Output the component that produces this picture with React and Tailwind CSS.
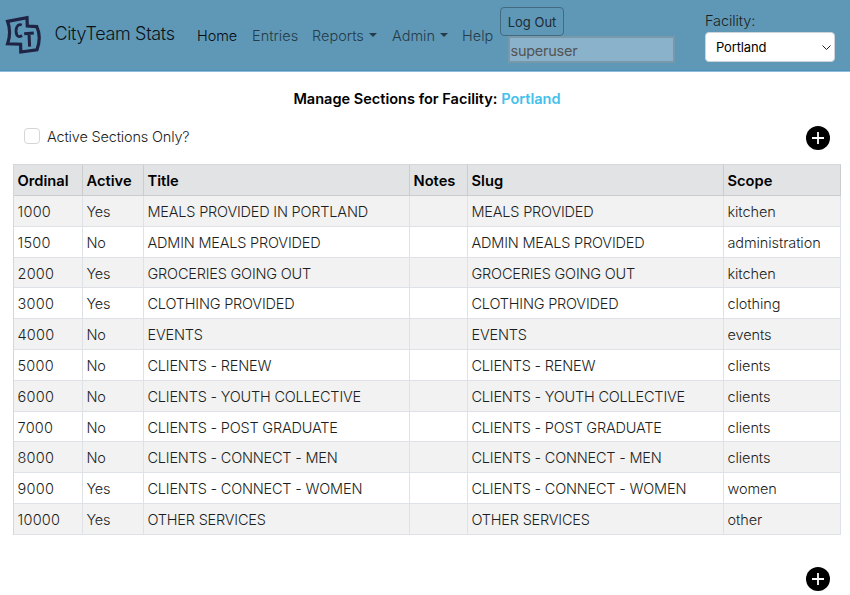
const rows = [
  ["1000", "Yes", "MEALS PROVIDED IN PORTLAND", "MEALS PROVIDED", "kitchen"],
  ["1500", "No", "ADMIN MEALS PROVIDED", "ADMIN MEALS PROVIDED", "administration"],
  ["2000", "Yes", "GROCERIES GOING OUT", "GROCERIES GOING OUT", "kitchen"],
  ["3000", "Yes", "CLOTHING PROVIDED", "CLOTHING PROVIDED", "clothing"],
  ["4000", "No", "EVENTS", "EVENTS", "events"],
  ["5000", "No", "CLIENTS - RENEW", "CLIENTS - RENEW", "clients"],
  ["6000", "No", "CLIENTS - YOUTH COLLECTIVE", "CLIENTS - YOUTH COLLECTIVE", "clients"],
  ["7000", "No", "CLIENTS - POST GRADUATE", "CLIENTS - POST GRADUATE", "clients"],
  ["8000", "No", "CLIENTS - CONNECT - MEN", "CLIENTS - CONNECT - MEN", "clients"],
  ["9000", "Yes", "CLIENTS - CONNECT - WOMEN", "CLIENTS - CONNECT - WOMEN", "women"],
  ["10000", "Yes", "OTHER SERVICES", "OTHER SERVICES", "other"],
];

const grid = "grid grid-cols-[69px_61px_266px_58px_256px_1fr]";

function Logo() {
  return (
    <svg className="mt-[15px] h-[40px] w-[36px] shrink-0" viewBox="0 0 36 40" fill="none" stroke="#1f2344">
      <path
        d="M2.6 6.4 L22 2.6 L22.3 11 L31.8 11.6 Q36.6 22 32 34.8 L15.8 37 L15.6 29.2 L2.6 28.8 Q6.6 17 2.6 6.4 Z"
        strokeWidth="3.2"
      />
      <path d="M16.8 10 Q13.4 8.8 11.8 12 Q10 16.5 12 20.4 Q14 22.8 17 20.4" strokeWidth="2.7" />
      <path d="M19.2 18.8 L28.8 18 M24 18.6 L24.6 31.6" strokeWidth="3" />
    </svg>
  );
}

function Caret() {
  return <span className="mt-[-3px] ml-[5px] border-x-[4px] border-t-[4.5px] border-x-transparent border-t-current" />;
}

function AddButton() {
  return (
    <button className="size-6 shrink-0 rounded-full bg-black" aria-label="Add">
      <svg viewBox="0 0 24 24" className="size-6">
        <path d="M12 6v12M6 12h12" stroke="white" strokeWidth="1.8" />
      </svg>
    </button>
  );
}

export default function App() {
  return (
    <div className="flex h-[595px] w-[850px] flex-col overflow-hidden bg-white font-['Inter',sans-serif] text-[14.5px] leading-[22px] text-[#1b1e21]">
      <header className="flex h-[72px] shrink-0 items-start border-b border-[#8fbcd6] bg-[#5f98b7] pl-[5px] whitespace-nowrap shadow-[inset_0_-1px_0_#4b90b8]">
        <Logo />
        <span className="mt-[20px] ml-[13.5px] w-[142.5px] text-[18px] leading-7 font-[350] tracking-[-0.35px] text-[#0c1318]">CityTeam Stats</span>
        <nav className="mt-[25px] flex w-[302.5px] font-[350] text-[#243b48]">
          <span className="w-[55px] tracking-[-0.1px] text-[#05090c]">Home</span>
          <span className="w-[60px]">Entries</span>
          <span className="flex w-[80px] items-center">Reports<Caret /></span>
          <span className="flex w-[70px] items-center">Admin<Caret /></span>
          <span>Help</span>
        </nav>
        <div className="flex w-[205.5px] flex-col items-start">
          <button className="mt-[7px] h-[29px] w-[64px] rounded-[4px] border border-[#41697f] pl-[1px] text-[13px] leading-[20px] text-[#1d2b33]">Log Out</button>
          <input className="ml-[8px] h-[27px] w-[167px] border-2 border-[#7799aa] bg-[#8ab2ca] px-px pt-px text-[14.5px] tracking-[-0.25px] text-[#545454]" defaultValue="superuser" disabled />
        </div>
        <div className="flex flex-col">
          <label className="mt-[10px] text-[14.5px] leading-[22px] font-[350] tracking-[-0.1px]">Facility:</label>
          <div className="flex h-[30px] w-[130px] items-center justify-between rounded-[4px] border border-[#ced4da] bg-white pr-[2px] pl-[10px] text-[13px] tracking-[-0.15px] text-black">
            Portland
            <svg className="size-[11px]" viewBox="0 0 11 11" fill="none" stroke="#222"><path d="m1.5 3.5 4 4 4-4" /></svg>
          </div>
        </div>
      </header>

      <main className="flex flex-col">
        <h1 className="mt-[16px] pl-[4px] text-center text-[14.55px] leading-[22px] font-semibold text-black">
          Manage Sections for Facility: <span className="text-[#45bfeb]">Portland</span>
        </h1>
        <div className="mt-[14px] flex h-[25.5px] items-end justify-between pr-[20px] pl-[24px]">
          <label className="mb-[2px] flex items-center gap-[7px] font-[350] tracking-[-0.18px]">
            <span className="-mt-[2px] size-4 rounded-[4px] border border-[#d6d6d6]" />
            Active Sections Only?
          </label>
          <AddButton />
        </div>
        <div className="mt-[14.5px] ml-[13px] flex w-[828px] flex-col border-t border-l border-[#d5d8da]">
          <div className={grid + " h-[31px] bg-[#e2e3e5] text-[14.7px] font-semibold text-black"}>
            {["Ordinal", "Active", "Title", "Notes", "Slug", "Scope"].map((h) => (
              <div key={h} className="border-r border-b border-[#cbccce] pt-[5px] pl-[3.5px]">{h}</div>
            ))}
          </div>
          {rows.map(([ordinal, active, title, slug, scope], i) => (
            <div key={ordinal} className={grid + " h-[30.8px] font-[350] " + (i % 2 ? "bg-white" : "bg-[#f2f2f2]")}>
              {[ordinal, active, title, "", slug, scope].map((v, j) => (
                <div
                  key={j}
                  className={
                    "overflow-hidden border-r border-b border-[#dee2e6] pt-[5px] pl-[3.5px] whitespace-nowrap " +
                    (j < 1 ? "tracking-[0.25px]" : j === 5 ? "tracking-[-0.1px]" : "tracking-[-0.2px]")
                  }
                >
                  {v}
                </div>
              ))}
            </div>
          ))}
        </div>
        <div className="mt-[32px] flex justify-end pr-[20px]">
          <AddButton />
        </div>
      </main>
    </div>
  );
}
